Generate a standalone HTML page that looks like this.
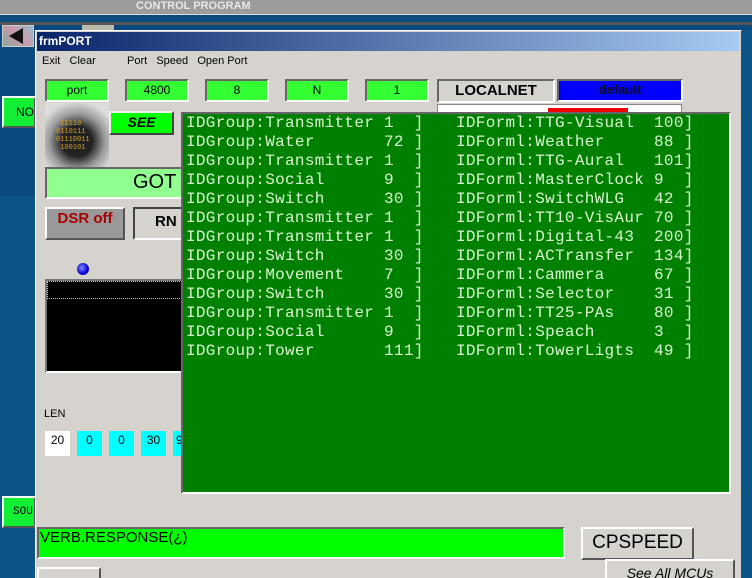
<!DOCTYPE html>
<html><head><style>
*{margin:0;padding:0;box-sizing:border-box}
html,body{width:752px;height:578px;overflow:hidden}
body{background:#0b4a80;font-family:"Liberation Sans",sans-serif;position:relative}
.a{position:absolute}
.btn{position:absolute;border:2px solid;border-color:#fff #555 #555 #fff}
.sunk{position:absolute;border:2px solid;border-color:#666 #fff #fff #666}
.g{background:#33ff33;text-align:center;font-size:12px;line-height:16px}
.mono{font-family:"Liberation Mono",monospace;font-size:16px;color:#d8f5d0;line-height:19px;white-space:pre;letter-spacing:0.3px}
</style></head><body>
<div class="a" style="left:0;top:0;width:752px;height:15px;background:#9c9c9c;border-bottom:1px solid #ddd"></div>
<div class="a" style="left:136px;top:0;font-size:11px;font-weight:bold;color:#e8e8e8;line-height:13px">CONTROL PROGRAM</div>
<div class="a" style="left:0;top:22px;width:752px;height:3px;background:#555"></div>
<div class="a" style="left:0;top:196px;width:36px;height:382px;background:#0c5488"></div>
<div class="a" style="left:2px;top:25px;width:32px;height:22px;background:linear-gradient(45deg,#8a9,#c9a,#9bc);border:1px solid #ccc"></div>
<div class="a" style="left:9px;top:28px;width:0;height:0;border-top:8px solid transparent;border-bottom:8px solid transparent;border-right:14px solid #111"></div>
<div class="a" style="left:82px;top:25px;width:32px;height:10px;background:#bba"></div>
<div class="btn" style="left:2px;top:96px;width:34px;height:32px;background:#11ee33;font-size:12px;line-height:28px;padding-left:12px">NO</div>
<div class="btn" style="left:2px;top:496px;width:34px;height:32px;background:#11ee33;font-size:11px;line-height:28px;padding-left:9px;font-family:'Liberation Mono',monospace">SOU</div>
<div class="a" style="left:35px;top:30px;width:707px;height:548px;background:#d6d3ce;border:1px solid #fff;border-right-color:#444;border-bottom:0"></div>
<div class="a" style="left:37px;top:32px;width:702px;height:19px;background:linear-gradient(90deg,#0a246a,#a6caf0)"></div>
<div class="a" style="left:39px;top:34px;color:#fff;font-weight:bold;font-size:12px;line-height:15px">frmPORT</div>
<div class="a" style="left:42px;top:54px;font-size:11px;line-height:14px">Exit&nbsp;&nbsp; Clear</div>
<div class="a" style="left:127px;top:54px;font-size:11px;line-height:14px">Port&nbsp;&nbsp; Speed&nbsp;&nbsp; Open Port</div>
<div class="sunk g" style="left:45px;top:79px;width:64px;height:23px;line-height:19px">port</div>
<div class="sunk g" style="left:125px;top:79px;width:64px;height:23px;line-height:19px">4800</div>
<div class="sunk g" style="left:205px;top:79px;width:64px;height:23px;line-height:19px">8</div>
<div class="sunk g" style="left:285px;top:79px;width:64px;height:23px;line-height:19px">N</div>
<div class="sunk g" style="left:365px;top:79px;width:64px;height:23px;line-height:19px">1</div>
<div class="sunk" style="left:437px;top:79px;width:118px;height:24px;background:#d6d3ce;font-weight:bold;font-size:15px;line-height:20px;text-align:center">LOCALNET</div>
<div class="sunk" style="left:557px;top:79px;width:126px;height:23px;background:#0000ff;font-weight:bold;font-size:13px;line-height:18px;text-align:center;color:#111">default</div>
<div class="a" style="left:437px;top:104px;width:245px;height:10px;background:#fff;border:1px solid #888"></div>
<div class="a" style="left:548px;top:108px;width:80px;height:5px;background:#e00"></div>
<div class="a" style="left:45px;top:103px;width:64px;height:64px;background:radial-gradient(circle at 50% 60%,#222 30%,#999 55%,#ddd 80%)"></div>
<div class="a" style="left:56px;top:120px;font-family:'Liberation Mono',monospace;font-size:7px;line-height:8px;color:#d4a020">&nbsp;11110<br>0110111<br>01110011<br>&nbsp;100101</div>
<div class="btn" style="left:109px;top:111px;width:65px;height:24px;background:#00ff00;border-color:#eee #444 #444 #eee;font-style:italic;font-weight:bold;font-size:14px;text-align:center;line-height:19px">SEE</div>
<div class="sunk" style="left:45px;top:167px;width:140px;height:32px;background:#90ff90;font-size:20px;line-height:27px;padding-left:86px">GOT</div>
<div class="btn" style="left:45px;top:207px;width:80px;height:33px;background:#999;color:#a00;font-weight:bold;font-size:15px;text-align:center;line-height:20px">DSR off</div>
<div class="btn" style="left:133px;top:207px;width:60px;height:33px;background:#d6d3ce;border-color:#444 #fff #fff #444;font-weight:bold;font-size:15px;line-height:26px;padding-left:20px">RN</div>
<div class="a" style="left:77px;top:263px;width:12px;height:12px;border-radius:50%;background:radial-gradient(circle at 40% 40%,#88f,#00c 60%)"></div>
<div class="a" style="left:45px;top:279px;width:140px;height:94px;background:#000;border:2px solid #777;border-right:0;border-bottom-color:#fff"></div>
<div class="a" style="left:47px;top:281px;width:135px;height:18px;border:1px dotted #ccc;border-right:0"></div>
<div class="a" style="left:44px;top:408px;font-size:11px">LEN</div>
<div class="a" style="left:45px;top:431px;width:25px;height:25px;background:#fff;text-align:center;font-size:12px;line-height:18px">20</div>
<div class="a" style="left:77px;top:431px;width:25px;height:25px;background:#00ffff;text-align:center;font-size:12px;line-height:18px">0</div>
<div class="a" style="left:109px;top:431px;width:25px;height:25px;background:#00ffff;text-align:center;font-size:12px;line-height:18px">0</div>
<div class="a" style="left:141px;top:431px;width:25px;height:25px;background:#00ffff;text-align:center;font-size:12px;line-height:18px">30</div>
<div class="a" style="left:173px;top:431px;width:10px;height:25px;background:#00ffff;font-size:12px;line-height:18px;padding-left:3px;overflow:hidden">9</div>
<div class="a" style="left:181px;top:112px;width:550px;height:382px;background:#008000;border:2px solid #666;border-right-color:#fff;border-bottom-color:#fff"></div>
<div class="a mono" style="left:186px;top:114px">IDGroup:Transmitter 1  ]
IDGroup:Water       72 ]
IDGroup:Transmitter 1  ]
IDGroup:Social      9  ]
IDGroup:Switch      30 ]
IDGroup:Transmitter 1  ]
IDGroup:Transmitter 1  ]
IDGroup:Switch      30 ]
IDGroup:Movement    7  ]
IDGroup:Switch      30 ]
IDGroup:Transmitter 1  ]
IDGroup:Social      9  ]
IDGroup:Tower       111]</div>
<div class="a mono" style="left:456px;top:114px">IDForml:TTG-Visual  100]
IDForml:Weather     88 ]
IDForml:TTG-Aural   101]
IDForml:MasterClock 9  ]
IDForml:SwitchWLG   42 ]
IDForml:TT10-VisAur 70 ]
IDForml:Digital-43  200]
IDForml:ACTransfer  134]
IDForml:Cammera     67 ]
IDForml:Selector    31 ]
IDForml:TT25-PAs    80 ]
IDForml:Speach      3  ]
IDForml:TowerLigts  49 ]</div>
<div class="sunk" style="left:37px;top:527px;width:528px;height:32px;background:#00ff00;font-size:15px;line-height:18px;padding-left:1px">VERB.RESPONSE(¿)</div>
<div class="btn" style="left:581px;top:527px;width:113px;height:33px;font-size:19px;text-align:center;line-height:28px">CPSPEED</div>
<div class="btn" style="left:605px;top:559px;width:130px;height:25px;font-style:italic;font-size:14px;text-align:center;line-height:24px">See All MCUs</div>
<div class="btn" style="left:37px;top:567px;width:64px;height:15px"></div>
<div class="a" style="left:742px;top:30px;width:10px;height:548px;background:#0c5488"></div>
</body></html>
